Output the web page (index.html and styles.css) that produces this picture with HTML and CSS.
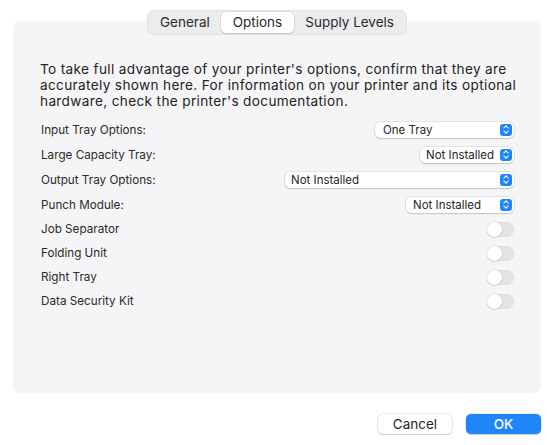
FILE: index.html
```html
<!DOCTYPE html>
<html lang="en">
<head>
  <meta charset="UTF-8" />
  <title>Printer Options</title>
  <link rel="stylesheet" href="styles.css">
</head>
<body>
  <div class="dialog">
    <div class="tabs">
      <div class="tab">General</div>
      <div class="tab selected">Options</div>
      <div class="tab">Supply Levels</div>
    </div>

    <div class="panel">
      <p class="intro">To take full advantage of your printer's options, confirm that they are accurately shown here. For information on your printer and its optional hardware, check the printer's documentation.</p>

      <div class="rows">
        <!-- popups -->
        <div class="row">
          <span class="label">Input Tray Options:</span>
          <div class="popup w-one">One Tray<span class="stepper"></span></div>
        </div>
        <div class="row">
          <span class="label">Large Capacity Tray:</span>
          <div class="popup w-small">Not Installed<span class="stepper"></span></div>
        </div>
        <div class="row">
          <span class="label">Output Tray Options:</span>
          <div class="popup w-wide">Not Installed<span class="stepper"></span></div>
        </div>
        <div class="row">
          <span class="label">Punch Module:</span>
          <div class="popup w-punch">Not Installed<span class="stepper"></span></div>
        </div>

        <!-- switches -->
        <div class="row short">
          <span class="label">Job Separator</span>
          <span class="switch"></span>
        </div>
        <div class="row short">
          <span class="label">Folding Unit</span>
          <span class="switch"></span>
        </div>
        <div class="row short">
          <span class="label">Right Tray</span>
          <span class="switch"></span>
        </div>
        <div class="row short">
          <span class="label">Data Security Kit</span>
          <span class="switch"></span>
        </div>
      </div>
    </div>

    <div class="buttons">
      <button class="btn">Cancel</button>
      <button class="btn primary">OK</button>
    </div>
  </div>
</body>
</html>
```

FILE: styles.css
```css
:root {
  --panel-bg: #f5f5f7;
  --text: #262626;
  --blue: #1e85fa;
  --font-stack: 'Inter', 'Noto Sans', sans-serif;
}

body {
  margin: 0;
  background: #ffffff;
  font-family: var(--font-stack);
  color: var(--text);
}

.dialog {
  width: 554px;
  height: 445px;
  padding-top: 10px;
  box-sizing: border-box;
}

.tabs {
  position: relative;
  z-index: 2;
  display: flex;
  width: max-content;
  margin: 0 auto -13px;
  padding: 2px;
  background: #ececee;
  border-radius: 7px;
  box-shadow: inset 0 0 0 0.5px rgba(0, 0, 0, 0.08);
  font-size: 13.5px;
}

.tab {
  height: 21px;
  line-height: 21px;
  padding: 0 11.5px;
  color: #2a2a2a;
  border-radius: 5px;
}

.tab.selected {
  background: #ffffff;
  box-shadow: 0 0 0 0.5px rgba(0, 0, 0, 0.12), 0 1px 1.5px rgba(0, 0, 0, 0.12);
}

.panel {
  height: 370px;
  margin: 0 14px;
  padding: 39px 26px 0;
  box-sizing: border-box;
  background: var(--panel-bg);
  border-radius: 6px;
  box-shadow: 0 0 0 1px rgba(0, 0, 0, 0.04);
}

.intro {
  margin: 0 -12px 8px 0;
  font-size: 13.6px;
  letter-spacing: 0.35px;
  line-height: 16px;
  color: #222;
}

.rows {
  display: flex;
  flex-direction: column;
}

.row {
  display: flex;
  justify-content: space-between;
  align-items: center;
  height: 25px;
  font-size: 11.7px;
}

.row.short {
  height: 24px;
}

.label {
  padding-left: 1px;
  color: #2a2a2a;
}

.popup {
  position: relative;
  height: 16px;
  line-height: 16px;
  padding-left: 8px;
  box-sizing: border-box;
  background: #ffffff;
  border-radius: 5px;
  box-shadow: 0 0 0 0.5px rgba(0, 0, 0, 0.14), 0 1px 1.5px rgba(0, 0, 0, 0.14);
  font-size: 11.5px;
  color: #262626;
}

.w-one { width: 139px; }
.w-small { width: 94px; padding-left: 6px; }
.w-wide { width: 229px; padding-left: 6px; }
.w-punch { width: 108px; padding-left: 7px; }

.stepper {
  position: absolute;
  right: 2px;
  top: 2px;
  width: 12px;
  height: 12px;
  border-radius: 3px;
  background: var(--blue);
}

.stepper::before,
.stepper::after {
  content: "";
  position: absolute;
  left: 4px;
  width: 3px;
  height: 3px;
  border: solid #fff;
  border-width: 1.2px 0 0 1.2px;
}

.stepper::before {
  top: 2.5px;
  transform: rotate(45deg);
}

.stepper::after {
  top: 5.5px;
  transform: rotate(225deg);
}

.switch {
  position: relative;
  width: 27px;
  height: 15px;
  border-radius: 8px;
  background: #e4e4e6;
  box-shadow: inset 0 0 0 0.5px rgba(0, 0, 0, 0.05);
}

.switch::after {
  content: "";
  position: absolute;
  left: 0;
  top: 0;
  width: 15px;
  height: 15px;
  border-radius: 50%;
  background: #ffffff;
  box-shadow: 0 0 0 0.5px rgba(0, 0, 0, 0.1), 0 1px 1px rgba(0, 0, 0, 0.1);
}

.buttons {
  display: flex;
  justify-content: flex-end;
  gap: 14px;
  padding: 22px 13px 0 0;
}

.btn {
  height: 20px;
  min-width: 74px;
  padding: 0 10px;
  border: none;
  border-radius: 5px;
  background: #ffffff;
  box-shadow: 0 0 0 0.5px rgba(0, 0, 0, 0.14), 0 1px 1.5px rgba(0, 0, 0, 0.16);
  font-family: var(--font-stack);
  font-size: 13.5px;
  color: #262626;
}

.btn.primary {
  min-width: 75px;
  background: var(--blue);
  color: #ffffff;
  font-weight: 500;
}
```
